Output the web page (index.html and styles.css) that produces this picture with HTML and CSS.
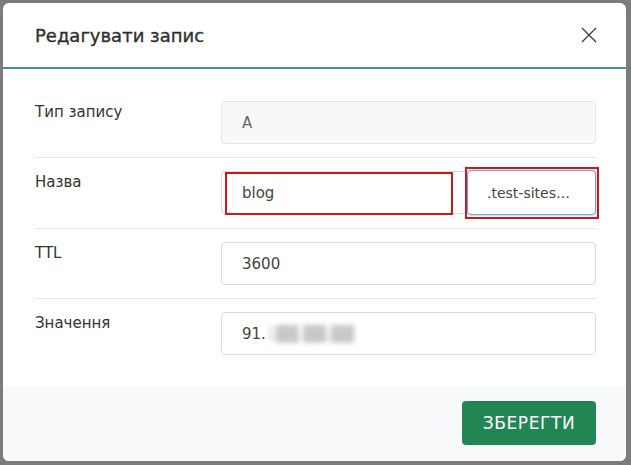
FILE: index.html
```html
<!DOCTYPE html>
<html lang="uk">
<head>
<meta charset="utf-8">
<title>Редагувати запис</title>
<link rel="stylesheet" href="styles.css">
</head>
<body>
<div class="modal">
  <div class="modal-header">
    <h2 class="modal-title">Редагувати запис</h2>
    <button class="close" aria-label="Закрити">
      <svg width="16" height="16" viewBox="0 0 16 16"><path d="M1 1 L15 15 M15 1 L1 15" stroke="#3a3a3a" stroke-width="1.3" fill="none"/></svg>
    </button>
  </div>
  <div class="modal-body">
    <div class="row">
      <div class="label">Тип запису</div>
      <div class="field"><div class="input disabled">A</div></div>
    </div>
    <div class="row">
      <div class="label">Назва</div>
      <div class="field group">
        <div class="input grow">blog</div>
        <div class="addon">.test-sites…</div>
        <div class="mark mark-1"></div>
        <div class="mark mark-2"></div>
      </div>
    </div>
    <div class="row">
      <div class="label">TTL</div>
      <div class="field"><div class="input">3600</div></div>
    </div>
    <div class="row last">
      <div class="label">Значення</div>
      <div class="field"><div class="input">91.<span class="blur">1██.██.██</span></div></div>
    </div>
  </div>
  <div class="modal-footer">
    <button class="btn-save">ЗБЕРЕГТИ</button>
  </div>
</div>
</body>
</html>
```
FILE: styles.css
```css
html, body {
  margin: 0;
  padding: 0;
  background: #7c7c7c;
  font-family: "DejaVu Sans", "Liberation Sans", sans-serif;
  color: #333;
}
body {
  padding: 3px 5px 4px 3px;
  height: 465px;
  box-sizing: border-box;
}
.modal {
  background: #fff;
  border-radius: 6px;
  overflow: hidden;
  height: 458px;
  display: flex;
  flex-direction: column;
}
.modal-header {
  height: 64px;
  border-bottom: 2px solid #4a8ca6;
  display: flex;
  align-items: center;
  justify-content: space-between;
  padding: 0 29px 0 32px;
}
.modal-title {
  margin: 0;
  font-size: 18px;
  font-weight: 400;
  color: #2f2f2f;
  -webkit-text-stroke: 0.35px #2f2f2f;
}
.close {
  border: 0;
  background: none;
  padding: 0;
  width: 16px;
  height: 16px;
  display: block;
}
.close svg { display: block; }
.modal-body {
  flex: 1;
  padding: 19px 30px 0 32px;
}
.row {
  display: flex;
  padding: 13px 0;
  border-bottom: 1px solid #e8e8e8;
}
.row.last { border-bottom: 0; }
.label {
  width: 186px;
  flex: none;
  font-size: 15px;
  padding-top: 2px;
  color: #333;
}
.field {
  flex: 1;
  display: flex;
  position: relative;
}
.input {
  flex: 1;
  height: 43px;
  box-sizing: border-box;
  border: 1px solid #dcdcdc;
  border-radius: 4px;
  padding: 0 20px;
  display: flex;
  align-items: center;
  font-size: 15px;
  color: #444;
  background: #fff;
}
.input.disabled {
  background: #f8f8f8;
  border-color: #e6e6e6;
  color: #666;
}
.group .input.grow {
  border-radius: 4px 0 0 4px;
  border-right: 0;
}
.addon {
  width: 129px;
  flex: none;
  height: 45px;
  margin-top: -1px;
  box-sizing: border-box;
  border: 1px solid #6fa6d6;
  box-shadow: 0 0 0 1px rgba(111, 166, 214, 0.35);
  border-radius: 4px;
  padding: 0 10px 0 19px;
  display: flex;
  align-items: center;
  font-size: 14px;
  color: #444;
  background: #fff;
  white-space: nowrap;
}
.blur {
  color: #c8c8c8;
  filter: blur(2.5px);
}
.mark {
  position: absolute;
  border: 2px solid #d0161b;
  box-sizing: border-box;
}
.mark-1 {
  left: 4px;
  top: 1px;
  width: 228px;
  height: 43px;
}
.mark-2 {
  left: 244px;
  top: -4px;
  width: 134px;
  height: 52px;
}
.modal-footer {
  height: 75px;
  background: #f8f9fa;
  display: flex;
  justify-content: flex-end;
  align-items: flex-start;
  padding: 15px 30px 0 0;
  box-sizing: border-box;
}
.btn-save {
  width: 134px;
  height: 44px;
  background: #228654;
  color: #fff;
  border: 0;
  border-radius: 4px;
  font-family: "DejaVu Sans", "Liberation Sans", sans-serif;
  font-size: 17px;
  letter-spacing: 0.6px;
  padding: 0;
}
```
